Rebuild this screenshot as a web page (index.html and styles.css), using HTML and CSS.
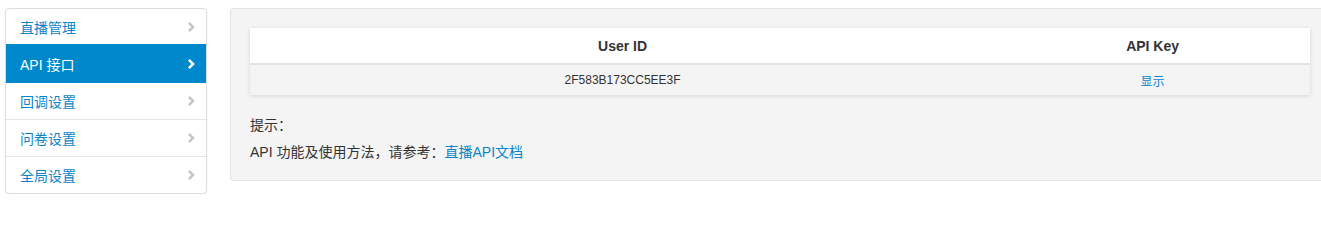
FILE: index.html
```html
<!DOCTYPE html>
<html lang="zh-CN">
<head>
<meta charset="utf-8">
<title>API 接口</title>
<link rel="stylesheet" href="styles.css">
</head>
<body>
<div class="layout">
  <nav class="sidebar">
    <a class="nav-item" href="#"><span>直播管理</span><svg class="chev" viewBox="0 0 8 10"><polygon points="0,1.8 1.8,0 6.8,5 1.8,10 0,8.2 3.2,5"/></svg></a>
    <a class="nav-item active" href="#"><span>API 接口</span><svg class="chev" viewBox="0 0 8 10"><polygon points="0,1.8 1.8,0 6.8,5 1.8,10 0,8.2 3.2,5"/></svg></a>
    <a class="nav-item" href="#"><span>回调设置</span><svg class="chev" viewBox="0 0 8 10"><polygon points="0,1.8 1.8,0 6.8,5 1.8,10 0,8.2 3.2,5"/></svg></a>
    <a class="nav-item" href="#"><span>问卷设置</span><svg class="chev" viewBox="0 0 8 10"><polygon points="0,1.8 1.8,0 6.8,5 1.8,10 0,8.2 3.2,5"/></svg></a>
    <a class="nav-item" href="#"><span>全局设置</span><svg class="chev" viewBox="0 0 8 10"><polygon points="0,1.8 1.8,0 6.8,5 1.8,10 0,8.2 3.2,5"/></svg></a>
  </nav>
  <main class="panel">
    <table class="keys">
      <thead>
        <tr><th class="col-id">User ID</th><th class="col-key">API Key</th></tr>
      </thead>
      <tbody>
        <tr><td>2F583B173CC5EE3F</td><td><a class="link" href="#">显示</a></td></tr>
      </tbody>
    </table>
    <p class="tip">提示：</p>
    <p class="tip">API 功能及使用方法，请参考：<a class="link" href="#">直播API文档</a></p>
  </main>
</div>
</body>
</html>
```

FILE: styles.css
```css
html, body {
  margin: 0;
  padding: 0;
  background: #fff;
}
body {
  font-family: "Liberation Sans", Arial, "Noto Sans CJK SC", sans-serif;
  color: #333;
  font-size: 14px;
}
.layout {
  display: flex;
  align-items: flex-start;
  gap: 23px;
  padding: 8px 0 0 5px;
}
.sidebar {
  width: 200px;
  flex: none;
  border: 1px solid #dedede;
  border-radius: 4px;
  background: #fff;
  box-shadow: 0 1px 2px rgba(0,0,0,0.08);
  display: flex;
  flex-direction: column;
  overflow: hidden;
}
.nav-item {
  display: flex;
  align-items: center;
  justify-content: space-between;
  height: 36px;
  padding: 0 10px 0 14px;
  color: #0a84c8;
  text-decoration: none;
  font-size: 14px;
  border-top: 1px solid #e5e5e5;
}
.nav-item:first-child {
  border-top: none;
}
.nav-item.active {
  background: #0088cc;
  color: #fff;
  border-top-color: #0088cc;
  height: 37px;
  margin-top: -1px;
}
.nav-item.active + .nav-item {
  border-top-color: #0088cc;
}
.chev {
  width: 8px;
  height: 10px;
  fill: #c6c6c6;
}
.nav-item.active .chev {
  fill: #fff;
}
.panel {
  flex: 1;
  min-width: 0;
  background: #f4f4f4;
  border: 1px solid #e2e2e2;
  border-right: none;
  border-radius: 4px 0 0 4px;
  padding: 19px 11px 18px 19px;
}
.keys {
  width: 100%;
  border-collapse: collapse;
  background: #f4f4f4;
  box-shadow: 0 1px 4px rgba(0,0,0,0.13);
  margin-bottom: 20px;
}
.keys th {
  background: #fff;
  height: 35px;
  font-size: 14px;
  font-weight: bold;
  color: #333;
  text-align: center;
  border-bottom: 2px solid #e3e3e3;
  padding: 0;
}
.keys .col-id { width: 70.3%; }
.keys td {
  height: 30px;
  padding: 0;
  font-size: 12px;
  text-align: center;
  color: #333;
}
.link {
  color: #0a84c8;
  text-decoration: none;
}
.tip {
  margin: 0 0 7px;
  line-height: 20px;
  font-size: 14px;
  color: #333;
}
.tip:last-child {
  margin-bottom: 0;
}
```
